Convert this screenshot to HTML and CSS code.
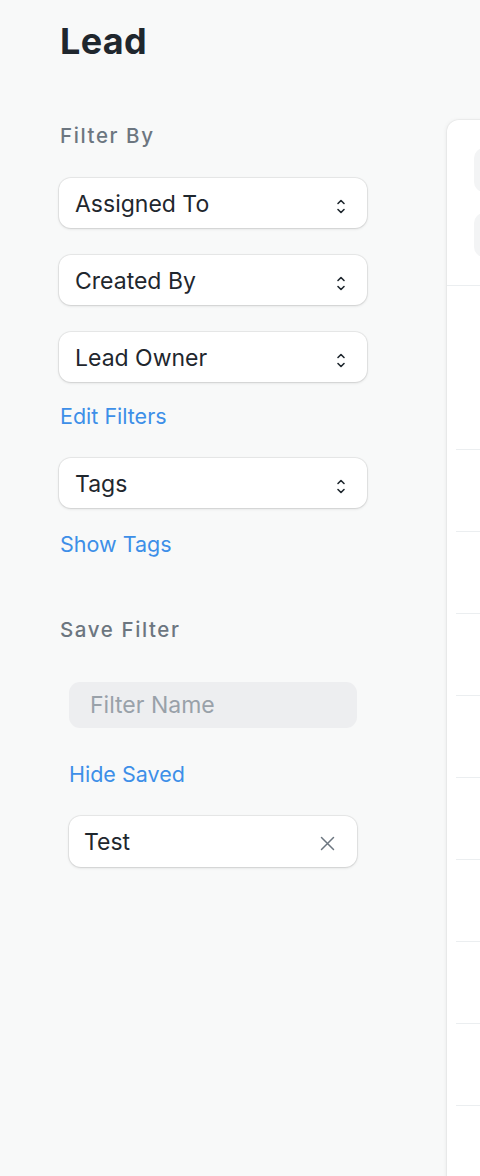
FILE: index.html
```html
<!DOCTYPE html>
<html lang="en">
<head>
<meta charset="utf-8">
<title>Lead</title>
<link rel="stylesheet" href="styles.css">
</head>
<body>
<header class="page-head">
  <h1 class="title">Lead</h1>
</header>
<div class="layout">
  <aside class="sidebar">
    <div class="label">Filter By</div>
    <div class="selects">
      <div class="select"><span>Assigned To</span><svg class="chev" viewBox="0 0 10 16" width="10" height="16"><path d="M2 5.5 5 2.5 8 5.5M2 11.5 5 14.5 8 11.5" fill="none" stroke="#1f272e" stroke-width="1.6" stroke-linecap="round" stroke-linejoin="round"/></svg></div>
      <div class="select"><span>Created By</span><svg class="chev" viewBox="0 0 10 16" width="10" height="16"><path d="M2 5.5 5 2.5 8 5.5M2 11.5 5 14.5 8 11.5" fill="none" stroke="#1f272e" stroke-width="1.6" stroke-linecap="round" stroke-linejoin="round"/></svg></div>
      <div class="select"><span>Lead Owner</span><svg class="chev" viewBox="0 0 10 16" width="10" height="16"><path d="M2 5.5 5 2.5 8 5.5M2 11.5 5 14.5 8 11.5" fill="none" stroke="#1f272e" stroke-width="1.6" stroke-linecap="round" stroke-linejoin="round"/></svg></div>
    </div>
    <a class="link link-edit">Edit Filters</a>
    <div class="select select-tags"><span>Tags</span><svg class="chev" viewBox="0 0 10 16" width="10" height="16"><path d="M2 5.5 5 2.5 8 5.5M2 11.5 5 14.5 8 11.5" fill="none" stroke="#1f272e" stroke-width="1.6" stroke-linecap="round" stroke-linejoin="round"/></svg></div>
    <a class="link link-tags">Show Tags</a>

    <div class="label label-save">Save Filter</div>
    <div class="save">
      <div class="input">Filter Name</div>
      <a class="link link-hide">Hide Saved</a>
      <div class="saved"><span>Test</span><svg class="close" viewBox="0 0 15 15" width="15" height="15"><path d="M1.5 1.5 13.5 13.5M13.5 1.5 1.5 13.5" fill="none" stroke="#6c7680" stroke-width="1.5" stroke-linecap="round"/></svg></div>
    </div>
  </aside>

  <main class="card">
    <div class="card-head">
      <div class="ph"></div>
      <div class="ph"></div>
    </div>
    <div class="list">
      <div class="row"></div>
      <div class="row"></div>
      <div class="row"></div>
      <div class="row"></div>
      <div class="row"></div>
      <div class="row"></div>
      <div class="row"></div>
      <div class="row"></div>
      <div class="row"></div>
    </div>
  </main>
</div>
</body>
</html>
```

FILE: styles.css
```css
* { box-sizing: border-box; }

html, body {
  margin: 0;
  padding: 0;
}

body {
  width: 480px;
  height: 1176px;
  overflow: hidden;
  background: #f8f9f9;
  font-family: Inter, "Noto Sans", "Liberation Sans", sans-serif;
  color: #1f272e;
}

.page-head {
  padding: 20px 0 0 60px;
  height: 120px;
}

.title {
  margin: 0;
  font-size: 36px;
  line-height: 43px;
  font-weight: 700;
  color: #1f272e;
  letter-spacing: 0.3px;
}

.layout {
  display: flex;
  align-items: flex-start;
  padding-left: 59px;
}

.sidebar {
  flex: none;
  width: 308px;
  display: flex;
  flex-direction: column;
  align-items: stretch;
}

.label {
  margin-top: 4px;
  font-size: 20.5px;
  line-height: 24px;
  font-weight: 500;
  color: #6c7680;
  letter-spacing: 1.6px;
  padding-left: 1px;
}

.selects {
  margin-top: 30px;
  display: flex;
  flex-direction: column;
  gap: 27px;
}

.select {
  height: 50px;
  background: #fff;
  border-radius: 12px;
  box-shadow: 0 0 0 1px rgba(0, 0, 0, 0.06), 0 1px 3px rgba(0, 0, 0, 0.13);
  display: flex;
  align-items: center;
  justify-content: space-between;
  padding: 2px 21px 0 16px;
  font-size: 23px;
  color: #1f272e;
}

.chev {
  display: block;
  margin-top: 3px;
}

.link {
  display: block;
  font-size: 21.5px;
  line-height: 26px;
  color: #3d8fe8;
  padding-left: 1px;
}

.link-edit { margin-top: 21px; }

.select-tags { margin-top: 29px; }

.link-tags { margin-top: 23px; }

.label-save { margin-top: 61px; }

.save {
  padding: 0 10px;
  display: flex;
  flex-direction: column;
}

.input {
  margin-top: 40px;
  height: 46px;
  background: #edeef0;
  border-radius: 11px;
  display: flex;
  align-items: center;
  padding-left: 21px;
  font-size: 23px;
  color: #99a1a9;
}

.link-hide { margin-top: 33px; padding-left: 0; }

.saved {
  margin-top: 29px;
  height: 51px;
  background: #fff;
  border-radius: 12px;
  box-shadow: 0 0 0 1px rgba(0, 0, 0, 0.06), 0 1px 3px rgba(0, 0, 0, 0.13);
  display: flex;
  align-items: center;
  justify-content: space-between;
  padding: 1px 22px 0 15px;
  font-size: 23px;
  color: #1f272e;
}

.close {
  display: block;
  margin-top: 3px;
}

.card {
  flex: none;
  width: 700px;
  height: 1100px;
  margin-left: 80px;
  background: #fff;
  border-radius: 12px 0 0 0;
  box-shadow: 0 0 0 1px rgba(0, 0, 0, 0.03), -1px 0 4px rgba(0, 0, 0, 0.06);
}

.card-head {
  padding: 28px 0 28px 27px;
  border-bottom: 1px solid #ebeef0;
  display: flex;
  flex-direction: column;
  gap: 21px;
}

.ph {
  height: 44px;
  width: 200px;
  background: #f3f4f5;
  border-radius: 10px;
}

.list {
  padding: 163px 0 0 9px;
}

.row {
  height: 82px;
  border-top: 1px solid #ebeef0;
}
```
